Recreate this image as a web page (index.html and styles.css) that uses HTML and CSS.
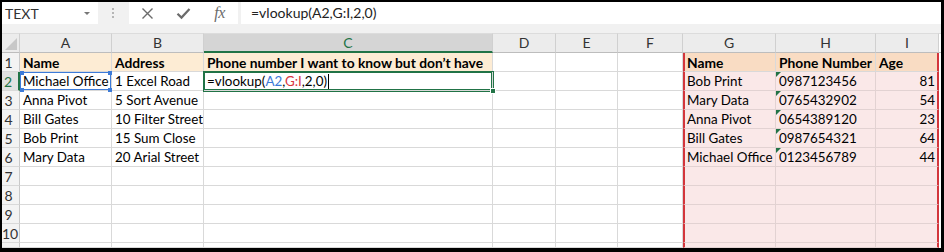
FILE: index.html
```html
<!DOCTYPE html>
<html>
<head>
<meta charset="utf-8">
<link rel="stylesheet" href="styles.css">
</head>
<body>
<div class="frame">
  <div class="app">
    <div class="toolbar">
      <div class="namebox"><span>TEXT</span><span class="dd"></span></div>
      <div class="grip"><span></span><span></span><span></span></div>
      <div class="buttons">
        <span class="btn"><svg width="13" height="13" viewBox="0 0 13 13"><path d="M1.5 1.5 L11.5 11.5 M11.5 1.5 L1.5 11.5" stroke="#6b6b6b" stroke-width="1.4" fill="none"/></svg></span>
        <span class="btn"><svg width="15" height="13" viewBox="0 0 15 13"><path d="M1.5 6.8 L5.5 10.6 L13.5 2" stroke="#6b6b6b" stroke-width="2.2" fill="none"/></svg></span>
        <span class="btn fx">fx</span>
      </div>
      <div class="fbar">=vlookup(A2,G:I,2,0)</div>
    </div>
    <div class="sheet">
      <div class="h corner"><span class="tri"></span></div>
      <div class="h">A</div><div class="h">B</div><div class="h hsel">C</div><div class="h">D</div><div class="h">E</div><div class="h">F</div><div class="h">G</div><div class="h">H</div><div class="h">I</div><div class="h pad"></div>

      <div class="r">1</div>
      <div class="c b p1">Name</div><div class="c b p1">Address</div><div class="c b p1">Phone number I want to know but don’t have</div><div class="c"></div><div class="c"></div><div class="c"></div>
      <div class="c b tg gl">Name</div><div class="c b tg">Phone Number</div><div class="c b tg gr">Age</div><div class="pad"></div>

      <div class="r rsel">2</div>
      <div class="c ref">Michael Office<i class="q q1"></i><i class="q q2"></i><i class="q q3"></i><i class="q q4"></i></div><div class="c">1 Excel Road</div>
      <div class="c active">=vlookup(<span class="blue">A2</span>,<span class="red">G:I</span>,2,0)<span class="caret"></span><i class="handle"></i></div>
      <div class="c"></div><div class="c"></div><div class="c"></div>
      <div class="c pk gl">Bob Print</div><div class="c pk txt">0987123456</div><div class="c pk gr num">81</div><div class="pad"></div>

      <div class="r">3</div>
      <div class="c">Anna Pivot</div><div class="c">5 Sort Avenue</div><div class="c"></div><div class="c"></div><div class="c"></div><div class="c"></div>
      <div class="c pk gl">Mary Data</div><div class="c pk txt">0765432902</div><div class="c pk gr num">54</div><div class="pad"></div>

      <div class="r">4</div>
      <div class="c">Bill Gates</div><div class="c">10 Filter Street</div><div class="c"></div><div class="c"></div><div class="c"></div><div class="c"></div>
      <div class="c pk gl">Anna Pivot</div><div class="c pk txt">0654389120</div><div class="c pk gr num">23</div><div class="pad"></div>

      <div class="r">5</div>
      <div class="c">Bob Print</div><div class="c">15 Sum Close</div><div class="c"></div><div class="c"></div><div class="c"></div><div class="c"></div>
      <div class="c pk gl">Bill Gates</div><div class="c pk txt">0987654321</div><div class="c pk gr num">64</div><div class="pad"></div>

      <div class="r">6</div>
      <div class="c">Mary Data</div><div class="c">20 Arial Street</div><div class="c"></div><div class="c"></div><div class="c"></div><div class="c"></div>
      <div class="c pk gl">Michael Office</div><div class="c pk txt">0123456789</div><div class="c pk gr num">44</div><div class="pad"></div>

      <div class="r">7</div>
      <div class="c"></div><div class="c"></div><div class="c"></div><div class="c"></div><div class="c"></div><div class="c"></div>
      <div class="c pk gl"></div><div class="c pk"></div><div class="c pk gr"></div><div class="pad"></div>

      <div class="r">8</div>
      <div class="c"></div><div class="c"></div><div class="c"></div><div class="c"></div><div class="c"></div><div class="c"></div>
      <div class="c pk gl"></div><div class="c pk"></div><div class="c pk gr"></div><div class="pad"></div>

      <div class="r">9</div>
      <div class="c"></div><div class="c"></div><div class="c"></div><div class="c"></div><div class="c"></div><div class="c"></div>
      <div class="c pk gl"></div><div class="c pk"></div><div class="c pk gr"></div><div class="pad"></div>

      <div class="r">10</div>
      <div class="c"></div><div class="c"></div><div class="c"></div><div class="c"></div><div class="c"></div><div class="c"></div>
      <div class="c pk gl"></div><div class="c pk"></div><div class="c pk gr"></div><div class="pad"></div>

      <div class="r"></div>
      <div class="c"></div><div class="c"></div><div class="c"></div><div class="c"></div><div class="c"></div><div class="c"></div>
      <div class="c pk gl"></div><div class="c pk"></div><div class="c pk gr"></div><div class="pad"></div>
    </div>
  </div>
</div>
</body>
</html>
```

FILE: styles.css
```css
* { box-sizing: border-box; margin: 0; padding: 0; }
html, body { margin: 0; background: #000; }
body { font-family: Lato, "Liberation Sans", sans-serif; color: #000; }

.frame { width: 944px; height: 252px; background: #000; padding: 2px 3px 4px 2px; }
.app { height: 100%; background: #f1f1f1; display: flex; flex-direction: column; overflow: hidden; }

.toolbar { height: 31px; flex: none; display: flex; align-items: flex-start; }
.namebox { width: 96px; height: 22px; background: #fff; display: flex; align-items: center; justify-content: space-between; padding: 0 8px 0 3px; font-size: 14px; color: #333; }
.dd { width: 0; height: 0; border-left: 3px solid transparent; border-right: 3px solid transparent; border-top: 3px solid #777; }
.grip { width: 31px; height: 22px; display: flex; flex-direction: column; align-items: center; justify-content: center; gap: 2px; padding-right: 2px; }
.grip span { width: 2px; height: 2px; background: #b5b5b5; }
.buttons { width: 109px; height: 22px; background: #fff; display: grid; grid-template-columns: 36px 36px 37px; align-items: center; justify-items: center; }
.btn { display: flex; align-items: center; justify-content: center; }
.fx { font-family: "Liberation Serif", serif; font-style: italic; font-size: 16px; color: #6b6b6b; letter-spacing: -0.5px; }
.fbar { flex: 1; height: 22px; margin-left: 3px; background: #fff; padding-left: 10px; font-size: 14px; line-height: 22px; color: #222; }

.sheet { flex: 1; display: grid; grid-template-columns: 18px 92px 92px 289px 63px 62px 65px 93px 100px 63px 1fr; grid-template-rows: 20px repeat(10, 19px) 1fr; background: #fff; }

.h { background: #ececec; border-right: 1px solid #d0d0d0; border-bottom: 1px solid #bdbdbd; border-top: 1px solid #dcdcdc; font-size: 14px; line-height: 18px; text-align: center; color: #333; }
.h.pad { border-right: none; }
.hsel { background: #d5d5d5; color: #217346; border-bottom: 2px solid #217346; }
.corner { display: flex; align-items: flex-end; justify-content: flex-end; padding: 0 2px 2px 0; }
.tri { width: 0; height: 0; border-left: 12px solid transparent; border-bottom: 12px solid #c8c8c8; }

.r { background: #f3f3f3; border-right: 1px solid #c9c9c9; border-bottom: 1px solid #d9d9d9; font-size: 14px; line-height: 19px; text-align: center; padding-right: 4px; color: #333; }
.rsel { background: #e1e1e1; color: #217346; border-right: 2px solid #217346; }

.c { position: relative; border-right: 1px solid #d9d9d9; border-bottom: 1px solid #d9d9d9; font-size: 13.4px; line-height: 19px; padding: 0 3px; white-space: nowrap; overflow: hidden; }
.b { font-weight: bold; font-size: 13.8px; }
.p1 { background: #fdecd4; }
.tg { background: #f9dcc3; }
.pk { background: #fae8e8; border-color: #e2d2d2; }
.gl { border-left: 2px solid #d3363c; padding-left: 2px; }
.gr { border-right: 2px solid #d3363c; }
.num { text-align: right; padding-right: 2px; }
.pad { background: #fff; }

.txt::before { content: ""; position: absolute; left: 0; top: 0; border-top: 5px solid #217346; border-right: 5px solid transparent; }

.ref { overflow: visible; box-shadow: inset 0 0 0 1px #3d7bd8; z-index: 2; }
.q { position: absolute; width: 4px; height: 4px; background: #3d7bd8; }
.q1 { left: 0; top: -1px; }
.q2 { right: -1px; top: -1px; }
.q3 { left: 0; bottom: -2px; }
.q4 { right: -1px; bottom: -2px; }

.active { overflow: visible; z-index: 3; box-shadow: 0 0 0 1px #217346, inset 0 0 0 1px #217346; }
.blue { color: #3b78d8; }
.red { color: #d9363e; }
.caret { display: inline-block; width: 1px; height: 15px; background: #000; vertical-align: -3px; margin-left: 1px; }
.handle { position: absolute; right: -4px; bottom: -4px; width: 6px; height: 6px; background: #217346; border: 1px solid #fff; }
```
